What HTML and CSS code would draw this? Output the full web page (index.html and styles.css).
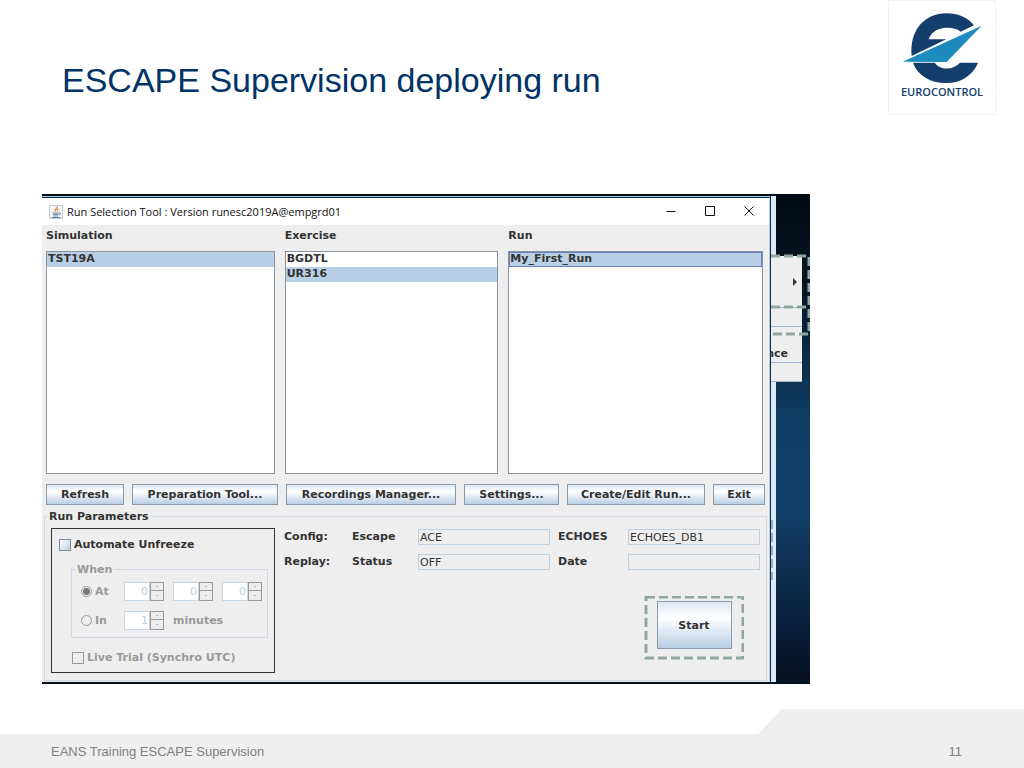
FILE: index.html
```html
<!DOCTYPE html>
<html lang="en">
<head>
    <meta charset="UTF-8">
    <meta name="viewport" content="width=device-width, initial-scale=1.0">
    <title>ESCAPE Supervision deploying run</title>
    <link rel="stylesheet" href="styles.css">
</head>
<body>
    <header class="header">
        <h1>ESCAPE Supervision deploying run</h1>
        <div class="logo">
            <svg class="logo-mark" viewBox="60 36 244 216" aria-hidden="true">
                <path fill="#143f6d" d="M91 168C84 90 130 40 195 40c35 0 67 14 83 36l-40 19c-13-11-33-13-50-11-23 2-40 16-46 34h53z"/>
                <path fill="#143f6d" d="M95 188h65c15 22 55 24 76 0h54c-15 37-50 61-95 61-50 0-87-24-100-61z"/>
                <path fill="#1d8bbd" d="M64 185L301 77 196 186z"/>
            </svg>
            <span class="logo-name">EUROCONTROL</span>
        </div>
    </header>

    <main class="desktop">
        <div class="window">
            <!-- Title bar -->
            <div class="titlebar">
                <svg class="java" viewBox="0 0 14 14" aria-hidden="true">
                    <path fill="#f6f6f6" stroke="#c3c9cf" d="M.5.5h13v13H.5z"/>
                    <path fill="none" stroke="#e0803c" stroke-width="1.3" d="M8 1.500C9 3 5 4 6.500 6.500M9.500 3.500C7.500 4.500 8 5 8.500 6.500"/>
                    <path fill="none" stroke="#6688a8" d="M3.500 8h6.500M4 9.500h5.500M4.500 11h4.500M2.500 12.500h9M10 8c2-.5 2 1.500 0 2"/>
                </svg>
                <span class="caption">Run Selection Tool : Version runesc2019A@empgrd01</span>
                <button class="win-btn" aria-label="Minimize"><svg viewBox="0 0 10 10"><path d="M.5 5.500h9"/></svg></button>
                <button class="win-btn" aria-label="Maximize"><svg viewBox="0 0 10 10"><path d="M.5.5h9v9h-9z"/></svg></button>
                <button class="win-btn" aria-label="Close"><svg viewBox="0 0 10 10"><path d="M.5.5l9 9M9.500.5l-9 9"/></svg></button>
            </div>

            <!-- Selection lists -->
            <div class="lists">
                <div class="list">
                    <label for="simulation">Simulation</label>
                    <select id="simulation" size="12">
                        <option selected>TST19A</option>
                    </select>
                </div>
                <div class="list">
                    <label for="exercise">Exercise</label>
                    <select id="exercise" size="12">
                        <option>BGDTL</option>
                        <option selected>UR316</option>
                    </select>
                </div>
                <div class="list">
                    <label for="run">Run</label>
                    <select id="run" size="12">
                        <option class="focused" selected>My_First_Run</option>
                    </select>
                </div>
            </div>

            <div class="toolbar">
                <button class="btn">Refresh</button>
                <button class="btn">Preparation Tool...</button>
                <button class="btn">Recordings Manager...</button>
                <button class="btn">Settings...</button>
                <button class="btn">Create/Edit Run...</button>
                <button class="btn">Exit</button>
            </div>

            <!-- Run parameters -->
            <fieldset class="group params">
                <legend>Run Parameters</legend>
                <div class="params-body">
                    <div class="automate">
                        <label class="check"><input type="checkbox"> Automate Unfreeze</label>
                        <fieldset class="group when" disabled>
                            <legend>When</legend>
                            <div class="when-row">
                                <label class="check"><input type="radio" name="when" checked> At</label>
                                <span class="spinner"><input type="number" value="0" aria-label="Hours"><button aria-label="Up"></button><button aria-label="Down"></button></span>
                                <span class="spinner"><input type="number" value="0" aria-label="Minutes"><button aria-label="Up"></button><button aria-label="Down"></button></span>
                                <span class="spinner"><input type="number" value="0" aria-label="Seconds"><button aria-label="Up"></button><button aria-label="Down"></button></span>
                            </div>
                            <div class="when-row">
                                <label class="check"><input type="radio" name="when"> In</label>
                                <span class="spinner"><input type="number" value="1" id="delay"><button aria-label="Up"></button><button aria-label="Down"></button></span>
                                <label for="delay">minutes</label>
                            </div>
                        </fieldset>
                        <label class="check live"><input type="checkbox" disabled> Live Trial (Synchro UTC)</label>
                    </div>

                    <div class="details">
                        <div class="fields">
                            <span>Config:</span>
                            <label for="escape">Escape</label>
                            <input id="escape" type="text" value="ACE" readonly>
                            <label for="echoes">ECHOES</label>
                            <input id="echoes" type="text" value="ECHOES_DB1" readonly>
                            <span>Replay:</span>
                            <label for="status">Status</label>
                            <input id="status" type="text" value="OFF" readonly>
                            <label for="date">Date</label>
                            <input id="date" type="text" readonly>
                        </div>
                        <div class="start">
                            <svg class="marker" aria-hidden="true"><rect x="2" y="1" width="97" height="61"/></svg>
                            <button class="btn btn-start">Start</button>
                        </div>
                    </div>
                </div>
            </fieldset>
        </div>

        <!-- Window and menu lying behind -->
        <div class="behind">
            <div class="menu">
                <div class="menu-item menu-sub"><i class="arrow"></i></div>
                <div class="menu-item"></div>
                <div class="menu-item menu-text">nce</div>
                <div class="menu-item"></div>
            </div>
            <svg class="marker" aria-hidden="true">
                <path d="M0 62h38v78H0M0 113h38"/>
                <path class="thin" d="M1 326v60"/>
            </svg>
        </div>
    </main>

    <footer class="footer">
        <span>EANS Training ESCAPE Supervision</span>
        <span>11</span>
    </footer>
</body>
</html>
```

FILE: styles.css
```css
* {
    box-sizing: border-box;
}

body {
    margin: 0;
    min-height: 100vh;
    display: flex;
    flex-direction: column;
    background-color: #fff;
    font-family: "Liberation Sans", Arial, sans-serif;
}

/* Slide header */
.header {
    display: flex;
    justify-content: space-between;
    padding: 0 28px 0 62px;
    margin-bottom: 79px;
}

h1 {
    margin: 60px 0 0;
    font-size: 34px;
    line-height: 40px;
    font-weight: normal;
    color: #003366;
}

.logo {
    width: 108px;
    height: 115px;
    padding-top: 11px;
    border: 1px solid #f3f3f3;
    display: flex;
    flex-direction: column;
    align-items: center;
}

.logo-mark {
    width: 82px;
    height: 72px;
}

.logo-name {
    font-family: "Open Sans", sans-serif;
    font-size: 11px;
    line-height: 16px;
    font-weight: 600;
    color: #143f6d;
}

/* Desktop */
.desktop {
    display: flex;
    width: 75%;
    margin-left: 42px;
    padding: 3px 0 2px;
    background: linear-gradient(#020b14, #061726 20%, #0f3c63 45%, #123f68 65%, #0a1f3b 88%, #05101f);
    font-family: "DejaVu Sans", sans-serif;
    font-size: 11px;
    line-height: 15px;
    font-weight: bold;
    color: #333;
}

.window {
    flex: 1;
    min-width: 0;
    background-color: #eee;
    border-top: 1px solid #0b2a4a;
    border-right: 1px solid #b8cfe5;
    box-shadow: 0 -1px #a9c6de;
    padding-bottom: 1px;
}

.titlebar {
    display: flex;
    align-items: center;
    height: 27px;
    padding: 0 1px 0 7px;
    background-color: #fff;
    font-family: "Open Sans", sans-serif;
    font-weight: normal;
    color: #111;
}

.java {
    width: 14px;
    height: 14px;
}

.caption {
    flex: 1;
    margin-left: 4px;
}

.win-btn {
    width: 39px;
    height: 27px;
    padding: 0;
    border: none;
    background: none;
}

.win-btn svg {
    width: 10px;
    height: 10px;
    fill: none;
    stroke: #111;
}

.lists {
    display: grid;
    grid-template-columns: 229fr 214fr 255fr;
    gap: 10px;
    padding: 3px 6px 0 4px;
}

.list label {
    display: block;
    margin-bottom: 8px;
}

select {
    display: block;
    width: 100%;
    height: 223px;
    padding: 0;
    border: 1px solid #8a939d;
    border-radius: 0;
    background-color: #fff;
    font: inherit;
    color: #333;
    overflow: hidden;
    outline: none;
}

option {
    min-height: 15px;
    padding: 0 1px;
    font-weight: bold;
}

option:checked {
    background: #b8cfe5 linear-gradient(#b8cfe5, #b8cfe5);
    color: #333;
}

option.focused {
    box-shadow: inset 0 0 0 1px #6382bf;
}

/* Buttons */
.toolbar {
    display: grid;
    grid-template-columns: 78fr 146fr 170fr 95fr 138fr 52fr;
    gap: 8px;
    padding: 10px 4px 4px;
}

.btn {
    height: 21px;
    padding: 0;
    border: 1px solid #8c9aa8;
    border-radius: 0;
    background: linear-gradient(#dde8f3, #fff 35%, #dde8f3 65%, #b8cfe5);
    font: inherit;
    color: #333;
    white-space: nowrap;
}

/* Group boxes */
.group {
    min-width: 0;
    margin: 0;
    border: 1px solid #ccd9e5;
}

.group legend {
    padding: 0 2px;
}

.params {
    margin: 0 2px;
    padding: 4px 6px 7px;
}

.params > legend {
    margin-left: -4px;
}

.params-body {
    display: flex;
    gap: 9px;
}

.automate {
    width: 224px;
    height: 145px;
    padding: 8px 6px 0 7px;
    border: 1px solid #333;
}

.check {
    display: flex;
    align-items: center;
    gap: 3px;
}

.check input {
    appearance: none;
    width: 12px;
    height: 12px;
    margin: 0;
    border: 1px solid #7a8a99;
    background: linear-gradient(135deg, #fff, #b8cfe5);
}

.check input[type="radio"] {
    width: 11px;
    height: 11px;
    border-radius: 50%;
}

.check input:disabled {
    border-color: #999;
    background: none;
}

.check input[type="radio"]:checked {
    background: radial-gradient(#777 0 3px, transparent 4px);
}

.when {
    width: 197px;
    margin: 10px 0 0 12px;
    padding: 5px 5px 7px 9px;
    color: #999;
}

.when > legend {
    margin-left: -6px;
}

.when-row {
    display: flex;
    align-items: center;
    gap: 9px;
    height: 19px;
}

.when-row + .when-row {
    margin-top: 10px;
}

.when-row .check {
    flex: none;
    width: 34px;
}

.live {
    margin: 12px 0 0 13px;
    color: #999;
}

.spinner {
    flex: none;
    display: grid;
    grid-template-columns: 26px 14px;
    grid-template-rows: 9px 10px;
}

.spinner input {
    appearance: textfield;
    grid-row: span 2;
    width: 26px;
    padding: 0 1px;
    border: 1px solid #c4d6e7;
    background-color: #fff;
    font: inherit;
    font-weight: normal;
    color: #b8cfe5;
    text-align: right;
}

.spinner input::-webkit-inner-spin-button {
    appearance: none;
}

.spinner button {
    padding: 0;
    border: 1px solid #999;
    background: radial-gradient(#bbb 0 1px, transparent 1px);
}

.spinner button:last-child {
    border-top: none;
}

/* Config fields */
.details {
    flex: 1;
    display: flex;
    flex-direction: column;
    padding-top: 1px;
}

.fields {
    display: grid;
    grid-template-columns: 60px 58px 1fr 62px 1fr;
    gap: 9px 8px;
}

.fields input {
    min-width: 0;
    width: 100%;
    height: 16px;
    padding: 0 1px;
    border: 1px solid #c0d0df;
    background-color: #eee;
    font: inherit;
    font-weight: normal;
    color: #333;
}

.start {
    position: relative;
    align-self: flex-end;
    display: flex;
    justify-content: center;
    width: 100px;
    height: 64px;
    margin: 26px 16px 0 0;
    padding-top: 5px;
}

.btn-start {
    width: 75px;
    height: 48px;
}

.marker {
    position: absolute;
    top: 0;
    left: 0;
    width: 100%;
    height: 100%;
    fill: none;
    stroke: #8fa7a1;
    stroke-width: 3;
    stroke-dasharray: 9 4;
}

.marker .thin {
    stroke: #5c7285;
    stroke-width: 1;
}

/* Things behind the main window */
.behind {
    position: relative;
    width: 40px;
    margin-top: -1px;
    border-left: 1px solid #0b2a4a;
    background: linear-gradient(90deg, #dcebf7 5px, transparent 5px);
}

.menu {
    position: absolute;
    top: 60px;
    left: 0;
    width: 31px;
    background-color: #eee;
}

.behind .marker {
    top: -2px;
}

.menu-item {
    height: 19px;
    border-bottom: 1px solid #a3b3d4;
    overflow: hidden;
}

.menu-sub {
    display: flex;
    align-items: center;
    justify-content: flex-end;
    height: 52px;
    padding-right: 5px;
}

.menu-text {
    display: flex;
    justify-content: flex-end;
    align-items: flex-end;
    height: 36px;
    padding: 0 14px 1px 0;
}

.arrow {
    border: 4px solid transparent;
    border-left-color: #333;
    border-right: none;
}

/* Slide footer */
.footer {
    display: flex;
    justify-content: space-between;
    height: 59px;
    margin-top: auto;
    padding: 34px 62px 0 51px;
    background-color: #efefef;
    clip-path: polygon(0 25px, calc(100% - 266px) 25px, calc(100% - 242px) 0, 100% 0, 100% 100%, 0 100%);
    font-size: 13px;
    line-height: 17px;
    color: #808080;
}
```
